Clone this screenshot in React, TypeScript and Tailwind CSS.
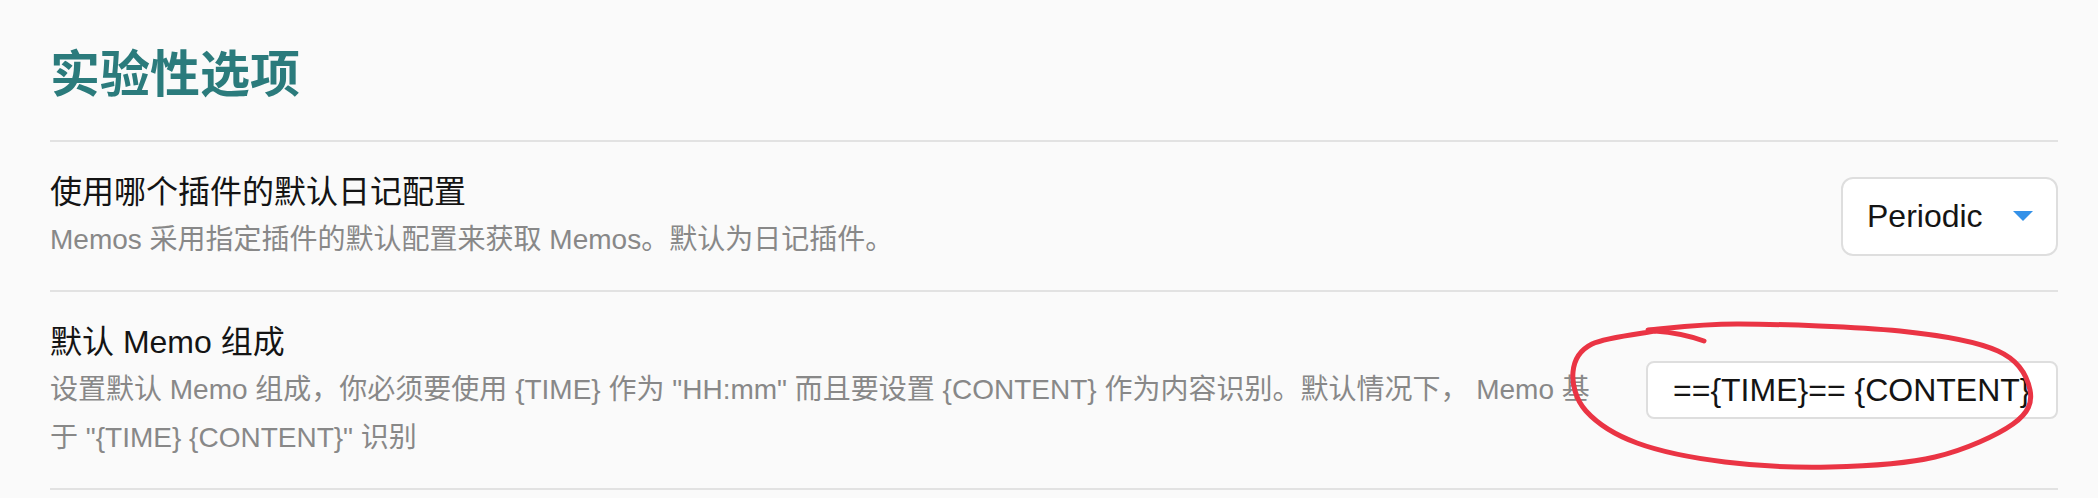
import type { ReactNode } from "react";

type Pt = [number, number];

// hand-drawn annotation loop, in page pixels
const loop: Pt[] = [
  [1655, 331],
  [1592, 344],
  [1573, 372],
  [1586, 411],
  [1637, 443],
  [1725, 462],
  [1830, 467],
  [1935, 457],
  [2013, 424],
  [2030, 390],
  [1998, 351],
  [1900, 331],
  [1739, 324],
  [1648, 330]
];

function smoothPath(points: Pt[]) {
  let d = `M${points[0][0]} ${points[0][1]}`;
  for (let i = 0; i < points.length - 1; i++) {
    const p0 = points[i - 1] ?? points[i];
    const p1 = points[i];
    const p2 = points[i + 1];
    const p3 = points[i + 2] ?? p2;
    const c1x = p1[0] + (p2[0] - p0[0]) / 6;
    const c1y = p1[1] + (p2[1] - p0[1]) / 6;
    const c2x = p2[0] - (p3[0] - p1[0]) / 6;
    const c2y = p2[1] - (p3[1] - p1[1]) / 6;
    d += ` C${c1x.toFixed(1)} ${c1y.toFixed(1)} ${c2x.toFixed(1)} ${c2y.toFixed(1)} ${p2[0]} ${p2[1]}`;
  }
  return d;
}

function SettingRow({
  title,
  description,
  children
}: {
  title: string;
  description: string;
  children: ReactNode;
}) {
  return (
    <div className="flex items-center gap-[30px] border-b-2 border-[#e2e2e2] py-[26px]">
      <div className="min-w-0 flex-1">
        <div className="text-[32px] leading-[48px] text-[#141414]">{title}</div>
        <div className="text-[28px] leading-[48px] text-[#888888]">{description}</div>
      </div>
      <div className="shrink-0">{children}</div>
    </div>
  );
}

export default function App() {
  return (
    <div className="relative min-h-[498px] w-full bg-[#fafafa] pt-[50px] pl-[50px] pr-[40px] font-['Liberation_Sans','Noto_Sans_CJK_SC',sans-serif]">
      <h2 className="border-b-2 border-[#e2e2e2] pb-[40px] text-[50px] leading-[50px] font-bold text-[#2b7b7c]">
        实验性选项
      </h2>

      <SettingRow
        title="使用哪个插件的默认日记配置"
        description="Memos 采用指定插件的默认配置来获取 Memos。默认为日记插件。"
      >
        <div className="flex h-[79px] w-[217px] items-center justify-between rounded-[12px] border-2 border-[#dedede] bg-white pl-[24px] pr-[23px]">
          <span className="text-[32px] text-[#141414]">Periodic</span>
          <svg width="20" height="10" viewBox="0 0 20 10" aria-hidden="true">
            <polygon points="0,0 20,0 10,10" fill="#3491e8" />
          </svg>
        </div>
      </SettingRow>

      <SettingRow
        title="默认 Memo 组成"
        description={'设置默认 Memo 组成，你必须要使用 {TIME} 作为 "HH:mm" 而且要设置 {CONTENT} 作为内容识别。默认情况下， Memo 基于 "{TIME} {CONTENT}" 识别'}
      >
        <input
          readOnly
          defaultValue="=={TIME}== {CONTENT}"
          className="h-[58px] w-[412px] rounded-[8px] border-2 border-[#dedede] bg-white pl-[25px] pr-[10px] text-[32px] text-[#141414] outline-none"
        />
      </SettingRow>

      <svg
        className="pointer-events-none absolute left-0 top-0"
        width="2098"
        height="498"
        viewBox="0 0 2098 498"
        aria-hidden="true"
      >
        <g fill="none" stroke="#ea3444" strokeWidth="5" strokeLinecap="round" strokeLinejoin="round">
          <path d="M1704 341 Q1682 333 1655 331" />
          <path d={smoothPath(loop)} />
        </g>
      </svg>
    </div>
  );
}
